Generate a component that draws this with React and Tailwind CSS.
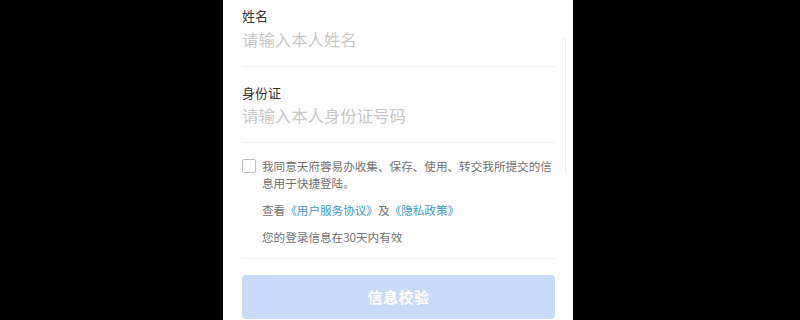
// ─── Identity check form ──────────────────────────────────────────────────────
function Field({ label, placeholder, first }) {
    return (
        <div className={first ? "pt-[6px]" : "pt-[16px]"}>
            <p className="text-[13px] leading-[20px] text-[#333]">{label}</p>
            <p className={`text-[16.4px] leading-[24px] text-[#c8c8c8] ${first ? "mt-[1px]" : ""}`}>{placeholder}</p>
            <div className={`${first ? "mt-[15px]" : "mt-[15px]"} h-px bg-[#f1f1f1]`} />
        </div>
    );
}

export default function App() {
    return (
        <div className="w-[800px] h-[320px] bg-black overflow-hidden" style={{ fontFamily: '"Noto Sans CJK SC", "Noto Sans", sans-serif' }}>
            <div className="relative ml-[223px] w-[350px] h-[320px] bg-white pl-[19px] pr-[18px]">
                <div className="absolute right-[7px] top-[38px] h-[136px] w-[3px] rounded-tr-[3px] border-r border-t border-[#eeeeee]" />
                <Field first label="姓名" placeholder="请输入本人姓名" />
                <Field label="身份证" placeholder="请输入本人身份证号码" />

                <div className="mt-[15px] flex gap-[6px]">
                    <span className="mt-[1px] w-[14px] h-[14px] shrink-0 rounded-[2px] border border-[#bdbdbd]" />
                    <div className="text-[11.6px] leading-[17px] text-[#707070]">
                        <p>我同意天府蓉易办收集、保存、使用、转交我所提交的信息用于快捷登陆。</p>
                        <p className="mt-[10px]">
                            查看<span className="text-[#3d98cc]">《用户服务协议》</span>及<span className="text-[#3d98cc]">《隐私政策》</span>
                        </p>
                        <p className="mt-[10px]">您的登录信息在30天内有效</p>
                    </div>
                </div>
                <div className="mt-[12px] h-px bg-[#f3f3f3]" />

                <button className="mt-[16px] w-full h-[44px] rounded-[4px] bg-[#c8dbfb] text-white text-[15px] font-bold tracking-[0.5px]">
                    信息校验
                </button>
            </div>
        </div>
    );
}
